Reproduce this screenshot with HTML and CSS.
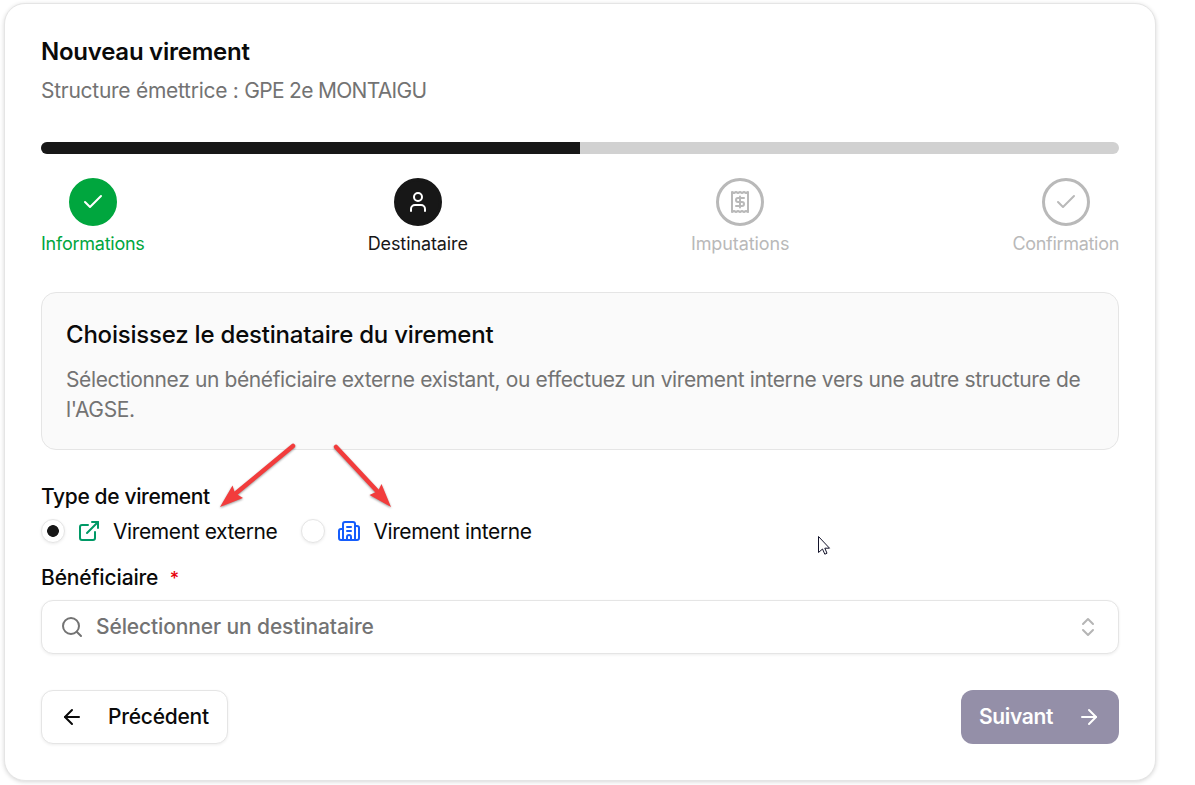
FILE: index.html
```html
<!DOCTYPE html>
<html lang="fr">
<head>
<meta charset="UTF-8">
<meta name="viewport" content="width=device-width, initial-scale=1.0">
<title>Nouveau virement</title>
<link rel="stylesheet" href="styles.css">
</head>
<body>

<main class="card">
  <header class="card-header">
    <h1 class="card-title">Nouveau virement</h1>
    <p class="card-subtitle">Structure émettrice : <span class="structure-name">GPE 2e MONTAIGU</span></p>
  </header>

  <section class="stepper">
    <div class="progress"><div class="progress-bar" style="width: 50%"></div></div>
    <ol class="steps">
      <li class="step done">
        <span class="step-circle">
          <svg class="icon" viewBox="0 0 24 24"><path d="M20 6 9 17l-5-5"/></svg>
        </span>
        <span class="step-label label-informations">Informations</span>
      </li>
      <li class="step active">
        <span class="step-circle">
          <svg class="icon" viewBox="0 0 24 24"><path d="M19 21v-2a4 4 0 0 0-4-4H9a4 4 0 0 0-4 4v2"/><circle cx="12" cy="7" r="4"/></svg>
        </span>
        <span class="step-label label-destinataire">Destinataire</span>
      </li>
      <li class="step">
        <span class="step-circle">
          <svg class="icon" viewBox="0 0 24 24"><path d="M4 2v20l2-1 2 1 2-1 2 1 2-1 2 1 2-1 2 1V2l-2 1-2-1-2 1-2-1-2 1-2-1-2 1Z"/><path d="M16 8h-6a2 2 0 1 0 0 4h4a2 2 0 1 1 0 4H8"/><path d="M12 17.5v-11"/></svg>
        </span>
        <span class="step-label label-imputations">Imputations</span>
      </li>
      <li class="step">
        <span class="step-circle">
          <svg class="icon" viewBox="0 0 24 24"><path d="M20 6 9 17l-5-5"/></svg>
        </span>
        <span class="step-label label-confirmation">Confirmation</span>
      </li>
    </ol>
  </section>

  <section class="info-box">
    <h2 class="info-title">Choisissez le destinataire du virement</h2>
    <p class="info-text">Sélectionnez un bénéficiaire externe existant, ou effectuez un virement interne vers une autre structure de l'AGSE.</p>
  </section>

  <form class="form">
    <div class="field type-field">
      <div class="label label-type">Type de virement</div>
      <div class="options">
        <label class="option">
          <input type="radio" name="type" class="radio" checked>
          <svg class="icon icon-externe" viewBox="0 0 24 24"><path d="M15 3h6v6"/><path d="M10 14 21 3"/><path d="M18 13v6a2 2 0 0 1-2 2H5a2 2 0 0 1-2-2V8a2 2 0 0 1 2-2h6"/></svg>
          <span class="option-text">Virement externe</span>
        </label>
        <label class="option">
          <input type="radio" name="type" class="radio">
          <svg class="icon icon-interne" viewBox="0 0 24 24"><path d="M10 12h4"/><path d="M10 8h4"/><path d="M14 21v-3a2 2 0 0 0-4 0v3"/><path d="M6 10H4a2 2 0 0 0-2 2v7a2 2 0 0 0 2 2h16a2 2 0 0 0 2-2V9a2 2 0 0 0-2-2h-2"/><path d="M6 21V5a2 2 0 0 1 2-2h8a2 2 0 0 1 2 2v16"/></svg>
          <span class="option-text">Virement interne</span>
        </label>
      </div>
    </div>

    <div class="field">
      <div class="label label-beneficiaire">Bénéficiaire <span class="required">*</span></div>
      <button type="button" class="select">
        <svg class="icon" viewBox="0 0 24 24"><circle cx="11" cy="11" r="8"/><path d="m21 21-4.3-4.3"/></svg>
        <span class="placeholder">Sélectionner un destinataire</span>
        <svg class="icon chevrons" viewBox="0 0 24 24"><path d="m7 15 5 5 5-5"/><path d="m7 9 5-5 5 5"/></svg>
      </button>
    </div>
  </form>

  <footer class="actions">
    <button type="button" class="btn btn-prev">
      <svg class="icon" viewBox="0 0 24 24"><path d="m12 19-7-7 7-7"/><path d="M19 12H5"/></svg>
      <span>Précédent</span>
    </button>
    <button type="button" class="btn btn-next" disabled>
      <span>Suivant</span>
      <svg class="icon" viewBox="0 0 24 24"><path d="M5 12h14"/><path d="m12 5 7 7-7 7"/></svg>
    </button>
  </footer>
</main>

<!-- Red arrows over the two transfer types -->
<svg class="arrows" viewBox="0 0 180 70">
  <path class="arrow-line" d="M78 5 20 53"/>
  <path class="arrow-head" d="M5 66 17.5 44.500 20 52 28 57Z"/>
  <path class="arrow-line" d="M121 6 163 51"/>
  <path class="arrow-head" d="M176 66 166.5 43 163 50 154.500 54Z"/>
</svg>

<!-- Mouse pointer -->
<svg class="pointer" viewBox="0 0 13 21">
  <path d="M.5.5V16.500L4.500 13l2.300 5.200 2.200-1L6.800 12.200H11.500Z"/>
</svg>

</body>
</html>
```
FILE: styles.css
```css
* {
  box-sizing: border-box;
}

body {
  margin: 0;
  padding: 3px 39px 4px 4px;
  font-family: Inter, "Liberation Sans", sans-serif;
  font-size: 21px;
  line-height: 30px;
  color: #0a0a0a;
  background-color: #fff;
}

h1, h2, p, ol {
  margin: 0;
  padding: 0;
}

.icon {
  width: 24px;
  height: 24px;
  flex-shrink: 0;
  fill: none;
  stroke: currentColor;
  stroke-width: 2;
  stroke-linecap: round;
  stroke-linejoin: round;
}

/* Card */
.card {
  display: flex;
  flex-direction: column;
  gap: 36px;
  height: 778px;
  padding: 36px;
  border: 1px solid #e5e5e5;
  border-radius: 21px;
  background-color: #fff;
  box-shadow: 0 1px 4px rgba(0, 0, 0, 0.16);
}

.card-header {
  display: flex;
  flex-direction: column;
  gap: 12px;
}

.card-title {
  font-size: 24px;
  line-height: 24px;
  font-weight: 600;
  letter-spacing: -0.25px;
}

.card-subtitle {
  color: #737373;
  letter-spacing: -0.27px;
}

.structure-name {
  letter-spacing: -0.7px;
}

/* Progress and steps */
.stepper {
  display: flex;
  flex-direction: column;
  gap: 24px;
}

.progress {
  height: 12px;
  border-radius: 6px;
  background-color: #d1d1d1;
  overflow: hidden;
}

.progress-bar {
  height: 100%;
  background-color: #171717;
}

.steps {
  display: flex;
  justify-content: space-between;
  list-style: none;
}

.step {
  display: flex;
  flex-direction: column;
  align-items: center;
  gap: 6px;
  color: #b9b9b9;
}

.step-circle {
  display: flex;
  align-items: center;
  justify-content: center;
  width: 48px;
  height: 48px;
  border: 3px solid #b9b9b9;
  border-radius: 50%;
}

.step-label {
  font-size: 18px;
  line-height: 24px;
}

.label-informations {
  letter-spacing: -0.24px;
}

.label-confirmation {
  letter-spacing: -0.3px;
}

.label-destinataire,
.label-imputations {
  letter-spacing: -0.1px;
}

.done {
  color: #00a63e;
}

.done .step-circle {
  color: #fff;
  border-color: #00a63e;
  background-color: #00a63e;
}

.active {
  color: #171717;
}

.active .step-circle {
  color: #fff;
  border-color: #171717;
  background-color: #171717;
}

/* Info box */
.info-box {
  display: flex;
  flex-direction: column;
  gap: 12px;
  padding: 24px;
  border: 1px solid #e5e5e5;
  border-radius: 15px;
  background-color: #fafafa;
}

.info-title {
  font-size: 24px;
  line-height: 36px;
  font-weight: 500;
  letter-spacing: -0.21px;
}

.info-text {
  color: #737373;
  letter-spacing: -0.38px;
}

/* Form */
.form {
  display: flex;
  flex-direction: column;
  gap: 24px;
}

.field {
  display: flex;
  flex-direction: column;
  gap: 12px;
}

.label {
  height: 21px;
  line-height: 21px;
  font-weight: 500;
}

.label-type {
  letter-spacing: -0.36px;
}

.label-beneficiaire {
  letter-spacing: -0.15px;
}

.required {
  margin-left: 6px;
  font-size: 18px;
  color: #e7000b;
}

.options {
  display: flex;
  gap: 24px;
}

.option {
  display: flex;
  align-items: center;
  gap: 12px;
  height: 24px;
}

.option-text {
  padding-top: 2px;
  letter-spacing: -0.39px;
}

.radio {
  appearance: none;
  width: 24px;
  height: 24px;
  margin: 0;
  border: 1px solid #e5e5e5;
  border-radius: 50%;
  background-color: #fff;
  box-shadow: 0 1px 3px rgba(0, 0, 0, 0.08);
}

.radio:checked {
  background-image: radial-gradient(circle, #171717 5.5px, transparent 6.2px);
}

.icon-externe {
  color: #009966;
}

.icon-interne {
  color: #155dfc;
}

.select {
  display: flex;
  align-items: center;
  gap: 12px;
  height: 54px;
  padding: 0 18px;
  font: inherit;
  font-weight: 500;
  color: #737373;
  text-align: left;
  border: 1px solid #e5e5e5;
  border-radius: 12px;
  background-color: #fff;
  box-shadow: 0 1px 3px rgba(0, 0, 0, 0.07);
}

.placeholder {
  letter-spacing: -0.12px;
}

.chevrons {
  margin-left: auto;
  color: #b5b5b5;
}

/* Buttons */
.actions {
  display: flex;
  justify-content: space-between;
}

.btn {
  display: flex;
  align-items: center;
  gap: 24px;
  height: 54px;
  padding: 0 18px;
  font: inherit;
  font-weight: 500;
  border: none;
  border-radius: 12px;
}

.btn-prev {
  color: #0a0a0a;
  letter-spacing: -0.25px;
  border: 1px solid #e5e5e5;
  background-color: #fff;
  box-shadow: 0 1px 3px rgba(0, 0, 0, 0.07);
}

.btn-next {
  color: #fff;
  font-weight: 600;
  letter-spacing: -0.35px;
  background-color: #948fa8;
}

/* Overlays */
.arrows {
  position: absolute;
  left: 215px;
  top: 441px;
  width: 180px;
  height: 70px;
  filter: drop-shadow(0 1px 1px rgba(0, 0, 0, 0.4));
}

.arrow-line {
  fill: none;
  stroke: #f23c3c;
  stroke-width: 4.5;
  stroke-linecap: round;
}

.arrow-head {
  fill: #f23c3c;
}

.pointer {
  position: absolute;
  left: 818px;
  top: 536px;
  width: 13px;
  height: 21px;
  fill: #fff;
  stroke: #14142b;
  stroke-width: 1;
}
```
